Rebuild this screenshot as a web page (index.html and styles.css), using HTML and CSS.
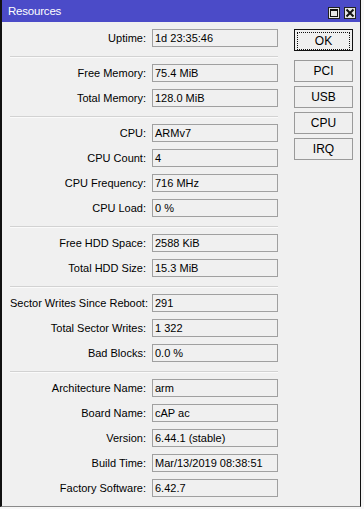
FILE: index.html
```html
<!DOCTYPE html>
<html lang="en">
<head>
    <meta charset="UTF-8">
    <title>Resources</title>
    <link rel="stylesheet" href="styles.css">
</head>
<body>

    <div class="window">
        <div class="titlebar">
            <span class="title">Resources</span>
            <div class="title-btns">
                <div class="tbtn">
                    <svg width="10" height="10" viewBox="0 0 10 10"><rect x="1.5" y="1.5" width="7" height="7" fill="none" stroke="#111" stroke-width="1"/><line x1="1" y1="2" x2="9" y2="2" stroke="#111" stroke-width="2"/></svg>
                </div>
                <div class="tbtn">
                    <svg width="10" height="10" viewBox="0 0 10 10"><path d="M1.5 1.5 L8.5 8.5 M8.5 1.5 L1.5 8.5" stroke="#111" stroke-width="2"/></svg>
                </div>
            </div>
        </div>

        <div class="content">
            <div class="fields">
                <div class="group">
                    <label>Uptime:</label><div class="box">1d 23:35:46</div>
                </div>
                <div class="sep"></div>
                <div class="group">
                    <label>Free Memory:</label><div class="box">75.4 MiB</div>
                    <label>Total Memory:</label><div class="box">128.0 MiB</div>
                </div>
                <div class="sep"></div>
                <div class="group">
                    <label>CPU:</label><div class="box">ARMv7</div>
                    <label>CPU Count:</label><div class="box">4</div>
                    <label>CPU Frequency:</label><div class="box">716 MHz</div>
                    <label>CPU Load:</label><div class="box">0 %</div>
                </div>
                <div class="sep"></div>
                <div class="group">
                    <label>Free HDD Space:</label><div class="box">2588 KiB</div>
                    <label>Total HDD Size:</label><div class="box">15.3 MiB</div>
                </div>
                <div class="sep"></div>
                <div class="group">
                    <label>Sector Writes Since Reboot:</label><div class="box">291</div>
                    <label>Total Sector Writes:</label><div class="box">1 322</div>
                    <label>Bad Blocks:</label><div class="box">0.0 %</div>
                </div>
                <div class="sep"></div>
                <div class="group">
                    <label>Architecture Name:</label><div class="box">arm</div>
                    <label>Board Name:</label><div class="box">cAP ac</div>
                    <label>Version:</label><div class="box">6.44.1 (stable)</div>
                    <label>Build Time:</label><div class="box">Mar/13/2019 08:38:51</div>
                    <label>Factory Software:</label><div class="box">6.42.7</div>
                </div>
            </div>

            <div class="buttons">
                <button class="btn default"><span>OK</span></button>
                <button class="btn first">PCI</button>
                <button class="btn">USB</button>
                <button class="btn">CPU</button>
                <button class="btn">IRQ</button>
            </div>
        </div>
    </div>

</body>
</html>
```

FILE: styles.css
```css
body {
    margin: 0;
    background-color: #f7f7f7;
    font-family: "Liberation Sans", Arial, sans-serif;
    font-size: 11px;
    color: #000;
}
.window {
    width: 358px;
    height: 506px;
    background-color: #f0f0f0;
    border-left: 2px solid #111;
    border-right: 1px solid #111;
    border-bottom: 1px solid #8a8a8a;
    display: flex;
    flex-direction: column;
}
.titlebar {
    height: 22px;
    background-color: #4b4bc8;
    display: flex;
    align-items: center;
    justify-content: space-between;
    padding: 0 4px 0 6px;
}
.title {
    color: #fff;
    font-size: 11.5px;
    letter-spacing: -0.2px;
}
.title-btns {
    display: flex;
    gap: 4px;
    margin-top: 3px;
}
.tbtn {
    width: 10px;
    height: 10px;
    background-color: #e6e6e6;
    border: 1px solid #222;
    display: flex;
}
.content {
    display: flex;
    padding: 7px 0 0 8px;
}
.fields {
    width: 268px;
}
.group {
    display: grid;
    grid-template-columns: 136px 126px;
    column-gap: 6px;
    row-gap: 7px;
}
.group label {
    text-align: right;
    line-height: 18px;
    white-space: nowrap;
}
.box {
    height: 16px;
    line-height: 16px;
    border: 1px solid #a0a0a0;
    padding-left: 2px;
    white-space: nowrap;
}
.sep {
    margin: 9px 0 6px;
    border-top: 1px solid #d2d2d2;
    border-bottom: 1px solid #fafafa;
}
.buttons {
    display: flex;
    flex-direction: column;
    gap: 4px;
    margin-left: 16px;
}
.btn {
    width: 59px;
    height: 22px;
    padding: 0;
    background-color: #efefef;
    border: 1px solid #9a9a9a;
    font-family: "Liberation Sans", Arial, sans-serif;
    font-size: 12px;
    color: #000;
}
.btn.default {
    border: 1px solid #111;
    padding: 2px;
}
.btn.default span {
    display: block;
    height: 16px;
    line-height: 16px;
    border: 1px dotted #111;
}
.btn.first {
    margin-top: 5px;
}
```
